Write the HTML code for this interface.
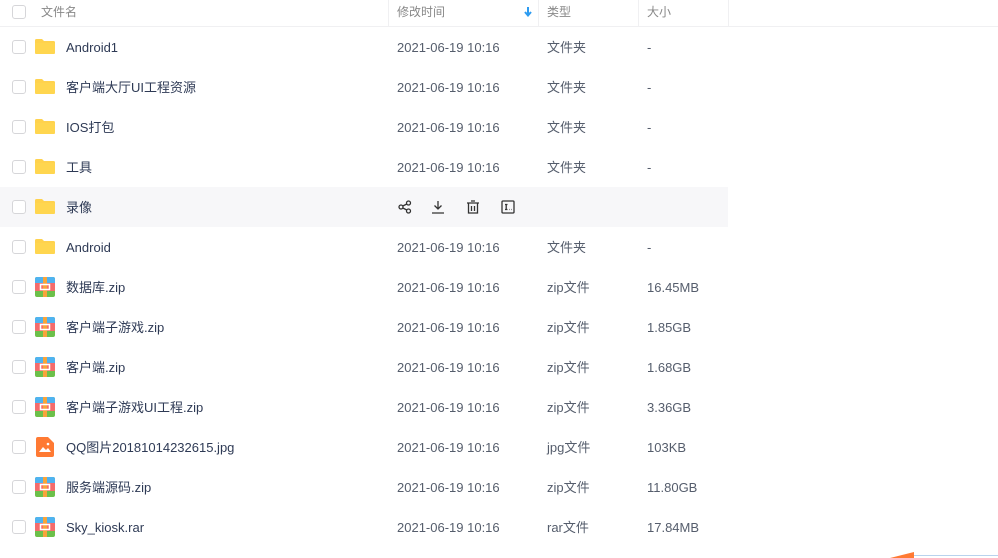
<!DOCTYPE html>
<html><head><meta charset="utf-8">
<style>
*{margin:0;padding:0;box-sizing:border-box}
body{width:998px;height:558px;overflow:hidden;background:#fff;font-family:"Liberation Sans","Noto Sans CJK SC",sans-serif;font-size:13px;color:#424e67;position:relative}
.hdr{position:absolute;left:0;top:0;width:998px;height:27px;border-bottom:1px solid #f0f0f2;color:#888;font-size:12px}
.hdr span{position:absolute;top:0;line-height:24px;height:24px}
.div{position:absolute;top:0;width:1px;height:26px;background:#f0f0f2}
.cb{position:absolute;left:12px;width:14px;height:14px;border:1px solid #d6d6d9;border-radius:3px;background:#fff}
.row{position:absolute;left:0;width:728px;height:40px}
.row.h{background:#f7f7f9}
.row .cb{top:13px}
.row svg.ic{position:absolute;left:35px;top:10px}
.row span{position:absolute;top:1px;height:40px;line-height:40px;white-space:nowrap}
.row .n{left:66px;color:#2e3a55}
.row .t{left:397px;color:#555d6c}
.row .ty{left:547px;color:#555d6c}
.row .s{left:647px;color:#555d6c}
.act{position:absolute;top:13px}
</style></head><body>
<div class="hdr">
<div class="cb" style="top:5px"></div>
<span style="left:41px">文件名</span>
<span style="left:397px">修改时间</span>
<svg style="position:absolute;left:524px;top:7px" width="8" height="10" viewBox="0 0 8 10"><path d="M4 0V8M1 5L4 8.5L7 5" fill="none" stroke="#2d9bf0" stroke-width="2"/></svg>
<span style="left:547px">类型</span>
<span style="left:647px">大小</span>
<div class="div" style="left:388px"></div>
<div class="div" style="left:538px"></div>
<div class="div" style="left:638px"></div>
<div class="div" style="left:728px"></div>
</div>
<svg width="0" height="0" style="position:absolute"><defs>
<symbol id="fd" viewBox="0 0 20 20"><path d="M0 3.5Q0 2 1.5 2H7l2 2H18.5Q20 4 20 5.5V15.5Q20 17 18.5 17H1.5Q0 17 0 15.5Z" fill="#ffd24d"/><path d="M0 6H20V15.5Q20 17 18.5 17H1.5Q0 17 0 15.5Z" fill="#ffd64f"/></symbol>
<symbol id="zp" viewBox="0 0 20 20"><rect x="0" y="0" width="20" height="20" rx="2" fill="#6cc04a"/><path d="M0 2Q0 0 2 0H18Q20 0 20 2V6H0Z" fill="#4fb3f0"/><rect x="0" y="6" width="20" height="8" fill="#f56c6c"/><rect x="8" y="0" width="4" height="20" fill="#f7a43a"/><rect x="5.5" y="7.5" width="9" height="5" fill="none" stroke="#fff" stroke-width="1.5"/></symbol>
<symbol id="im" viewBox="0 0 20 20"><path d="M1 2Q1 0 3 0H13L19 6V18Q19 20 17 20H3Q1 20 1 18Z" fill="#ff7a33"/><path d="M4 15L8 10L11 13L13 11L16 15Z" fill="#fff"/><circle cx="13" cy="7" r="1.3" fill="#fff"/></symbol>
</defs></svg>
<div class="row" style="top:27px"><div class="cb"></div><svg class="ic" width="20" height="20"><use href="#fd"/></svg><span class="n">Android1</span><span class="t">2021-06-19 10:16</span><span class="ty">文件夹</span><span class="s">-</span></div>
<div class="row" style="top:67px"><div class="cb"></div><svg class="ic" width="20" height="20"><use href="#fd"/></svg><span class="n">客户端大厅UI工程资源</span><span class="t">2021-06-19 10:16</span><span class="ty">文件夹</span><span class="s">-</span></div>
<div class="row" style="top:107px"><div class="cb"></div><svg class="ic" width="20" height="20"><use href="#fd"/></svg><span class="n">IOS打包</span><span class="t">2021-06-19 10:16</span><span class="ty">文件夹</span><span class="s">-</span></div>
<div class="row" style="top:147px"><div class="cb"></div><svg class="ic" width="20" height="20"><use href="#fd"/></svg><span class="n">工具</span><span class="t">2021-06-19 10:16</span><span class="ty">文件夹</span><span class="s">-</span></div>
<div class="row h" style="top:187px"><div class="cb"></div><svg class="ic" width="20" height="20"><use href="#fd"/></svg><span class="n">录像</span>
<svg class="act" style="left:398px" width="14" height="14" viewBox="0 0 14 14" fill="none" stroke="#333" stroke-width="1.3"><circle cx="3" cy="7" r="2"/><circle cx="10.5" cy="3" r="2"/><circle cx="10.5" cy="11" r="2"/><path d="M4.8 6L8.8 4M4.8 8L8.8 10"/></svg>
<svg class="act" style="left:431px" width="14" height="14" viewBox="0 0 14 14" fill="none" stroke="#333" stroke-width="1.3"><path d="M7 1V9M3.5 5.5L7 9L10.5 5.5M1 13H13"/></svg>
<svg class="act" style="left:466px" width="14" height="14" viewBox="0 0 14 14" fill="none" stroke="#333" stroke-width="1.3"><path d="M1 3H13M5 1H9M2.5 3V13H11.5V3M5.5 6V11M8.5 6V11"/></svg>
<svg class="act" style="left:501px" width="14" height="14" viewBox="0 0 14 14" fill="none" stroke="#333" stroke-width="1.3"><rect x="1" y="1" width="12" height="12" rx="1"/><path d="M4 4.5H6.5M5.2 4.5V9.5M4 9.5H6.5"/><path d="M8.5 9.5H9M10.5 9.5H11"/></svg>
</div>
<div class="row" style="top:227px"><div class="cb"></div><svg class="ic" width="20" height="20"><use href="#fd"/></svg><span class="n">Android</span><span class="t">2021-06-19 10:16</span><span class="ty">文件夹</span><span class="s">-</span></div>
<div class="row" style="top:267px"><div class="cb"></div><svg class="ic" width="20" height="20"><use href="#zp"/></svg><span class="n">数据库.zip</span><span class="t">2021-06-19 10:16</span><span class="ty">zip文件</span><span class="s">16.45MB</span></div>
<div class="row" style="top:307px"><div class="cb"></div><svg class="ic" width="20" height="20"><use href="#zp"/></svg><span class="n">客户端子游戏.zip</span><span class="t">2021-06-19 10:16</span><span class="ty">zip文件</span><span class="s">1.85GB</span></div>
<div class="row" style="top:347px"><div class="cb"></div><svg class="ic" width="20" height="20"><use href="#zp"/></svg><span class="n">客户端.zip</span><span class="t">2021-06-19 10:16</span><span class="ty">zip文件</span><span class="s">1.68GB</span></div>
<div class="row" style="top:387px"><div class="cb"></div><svg class="ic" width="20" height="20"><use href="#zp"/></svg><span class="n">客户端子游戏UI工程.zip</span><span class="t">2021-06-19 10:16</span><span class="ty">zip文件</span><span class="s">3.36GB</span></div>
<div class="row" style="top:427px"><div class="cb"></div><svg class="ic" width="20" height="20"><use href="#im"/></svg><span class="n">QQ图片20181014232615.jpg</span><span class="t">2021-06-19 10:16</span><span class="ty">jpg文件</span><span class="s">103KB</span></div>
<div class="row" style="top:467px"><div class="cb"></div><svg class="ic" width="20" height="20"><use href="#zp"/></svg><span class="n">服务端源码.zip</span><span class="t">2021-06-19 10:16</span><span class="ty">zip文件</span><span class="s">11.80GB</span></div>
<div class="row" style="top:507px"><div class="cb"></div><svg class="ic" width="20" height="20"><use href="#zp"/></svg><span class="n">Sky_kiosk.rar</span><span class="t">2021-06-19 10:16</span><span class="ty">rar文件</span><span class="s">17.84MB</span></div>
<div style="position:absolute;left:913px;top:555px;width:85px;height:1px;background:#b9d3ee"></div>
<div style="position:absolute;left:890px;top:552px;width:24px;height:6px;background:#ff7a33;clip-path:polygon(0 100%,100% 0,100% 100%)"></div>
</body></html>
